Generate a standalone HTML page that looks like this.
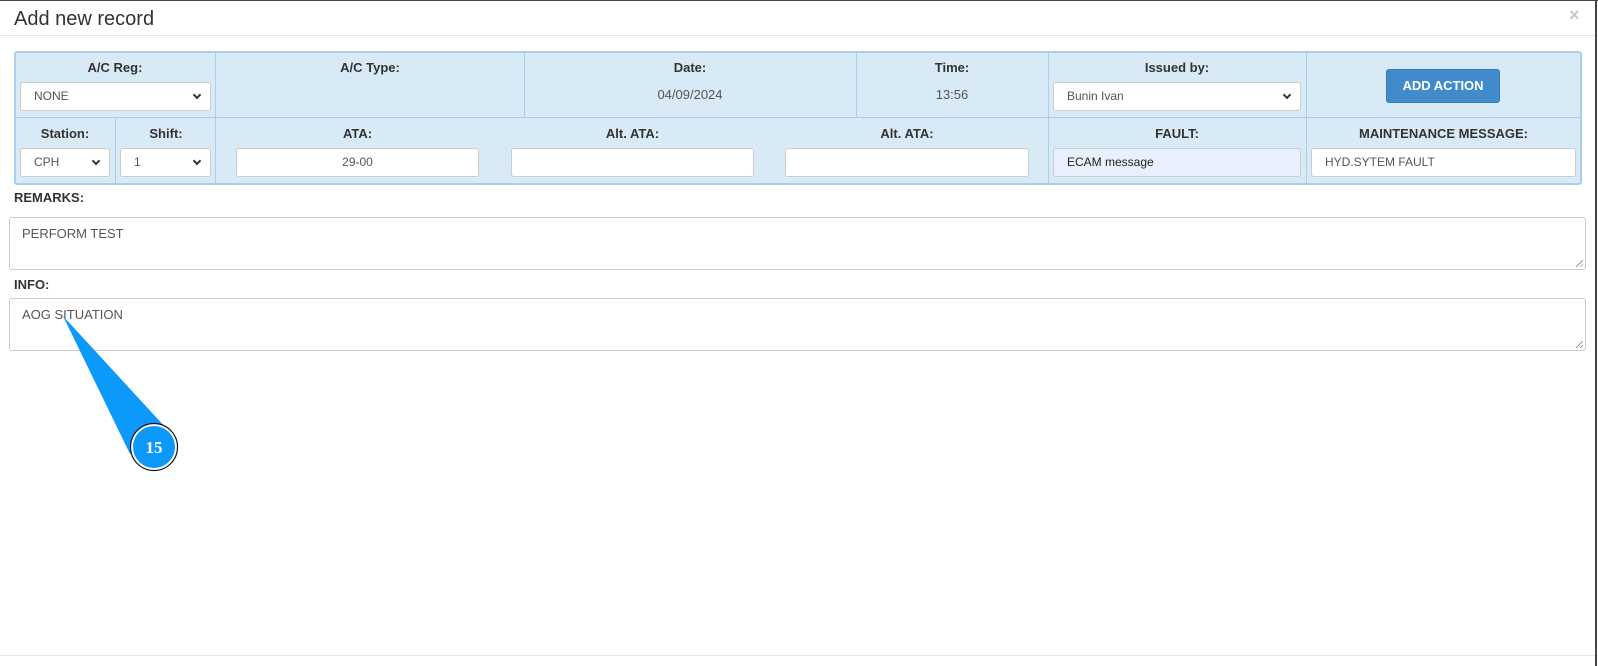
<!DOCTYPE html>
<html><head><meta charset="utf-8"><style>
*{box-sizing:border-box}
body{margin:0;width:1598px;height:666px;background:#fff;font-family:"Liberation Sans",Arial,sans-serif;color:#333;position:relative;overflow:hidden}
.a{position:absolute}
.lbl{position:absolute;font-weight:bold;font-size:13px;text-align:center;color:#333}
.inp{position:absolute;background:#fff;border:1px solid #ccc;border-radius:3px;font-size:12px;color:#555;line-height:26px;padding-left:13px}
.sel::after{content:"";position:absolute;right:10px;top:9px;width:4px;height:4px;border-right:2px solid #333;border-bottom:2px solid #333;transform:rotate(45deg)}
.vl{position:absolute;width:1px;background:#a9cfec}
.ta::after{content:"";position:absolute;right:2px;bottom:2px;width:7px;height:7px;background:linear-gradient(135deg,transparent 45%,#999 45%,#999 55%,transparent 55%,transparent 75%,#999 75%,#999 85%,transparent 85%)}
</style></head><body>
<div class="a" style="left:0;top:0;width:1598px;height:1px;background:#444"></div>
<div class="a" style="left:1595px;top:0;width:2px;height:666px;background:#444"></div>
<div class="a" style="left:14px;top:8px;font-size:20px;color:#333">Add new record</div>
<div class="a" style="left:1569px;top:5px;font-size:18px;color:#c8c8c8;font-weight:bold">×</div>
<div class="a" style="left:0;top:35px;width:1595px;height:1px;background:#e5e5e5"></div>
<div class="a" style="left:0;top:655px;width:1595px;height:1px;background:#e5e5e5"></div>

<div class="a" style="left:14px;top:51px;width:1568px;height:134px;background:#d9eaf7;border:2px solid #a9cfec;border-radius:3px"></div>
<div class="a" style="left:15px;top:117px;width:1566px;height:1px;background:#a9cfec"></div>
<div class="vl" style="left:215px;top:52px;height:132px"></div>
<div class="vl" style="left:524px;top:52px;height:66px"></div>
<div class="vl" style="left:856px;top:52px;height:66px"></div>
<div class="vl" style="left:1048px;top:52px;height:132px"></div>
<div class="vl" style="left:1306px;top:52px;height:132px"></div>
<div class="vl" style="left:115px;top:118px;height:66px"></div>

<div class="lbl" style="left:15px;width:200px;top:60px">A/C Reg:</div>
<div class="lbl" style="left:216px;width:308px;top:60px">A/C Type:</div>
<div class="lbl" style="left:524px;width:332px;top:60px">Date:</div>
<div class="lbl" style="left:856px;width:192px;top:60px">Time:</div>
<div class="lbl" style="left:1048px;width:258px;top:60px">Issued by:</div>
<div class="a" style="left:524px;width:332px;top:87px;text-align:center;font-size:13px;color:#555">04/09/2024</div>
<div class="a" style="left:856px;width:192px;top:87px;text-align:center;font-size:13px;color:#555">13:56</div>
<div class="inp sel" style="left:20px;top:82px;width:191px;height:29px">NONE</div>
<div class="inp sel" style="left:1053px;top:82px;width:248px;height:29px">Bunin Ivan</div>
<div class="a" style="left:1386px;top:69px;width:114px;height:34px;background:#428bca;border:1px solid #357ebd;border-radius:3px;color:#fff;font-weight:bold;font-size:13px;text-align:center;line-height:32px">ADD ACTION</div>

<div class="lbl" style="left:15px;width:100px;top:126px">Station:</div>
<div class="lbl" style="left:116px;width:100px;top:126px">Shift:</div>
<div class="lbl" style="left:236px;width:243px;top:126px">ATA:</div>
<div class="lbl" style="left:511px;width:243px;top:126px">Alt. ATA:</div>
<div class="lbl" style="left:785px;width:244px;top:126px">Alt. ATA:</div>
<div class="lbl" style="left:1048px;width:258px;top:126px">FAULT:</div>
<div class="lbl" style="left:1306px;width:275px;top:126px">MAINTENANCE MESSAGE:</div>
<div class="inp sel" style="left:20px;top:148px;width:90px;height:29px">CPH</div>
<div class="inp sel" style="left:120px;top:148px;width:91px;height:29px">1</div>
<div class="inp" style="left:236px;top:148px;width:243px;height:29px;text-align:center;padding:0">29-00</div>
<div class="inp" style="left:511px;top:148px;width:243px;height:29px"></div>
<div class="inp" style="left:785px;top:148px;width:244px;height:29px"></div>
<div class="inp" style="left:1053px;top:148px;width:248px;height:29px;background:#e8f0fd;color:#222">ECAM message</div>
<div class="inp" style="left:1311px;top:148px;width:265px;height:29px">HYD.SYTEM FAULT</div>

<div class="lbl" style="left:14px;top:190px;text-align:left">REMARKS:</div>
<div class="inp ta" style="left:9px;top:217px;width:1577px;height:53px;font-size:13px;line-height:16px;padding:8px 12px">PERFORM TEST</div>
<div class="lbl" style="left:14px;top:277px;text-align:left">INFO:</div>
<div class="inp ta" style="left:9px;top:298px;width:1577px;height:53px;font-size:13px;line-height:16px;padding:8px 12px">AOG SITUATION</div>

<svg class="a" style="left:0;top:0" width="1598" height="666">
<polygon points="63,316 130,454 166,428" fill="#0d99fc"/>
<circle cx="154" cy="447" r="22" fill="#0d99fc" stroke="#fff" stroke-width="2"/>
<circle cx="154" cy="447" r="23.5" fill="none" stroke="#111" stroke-width="1.2"/>
<text x="154" y="453" text-anchor="middle" font-family="Liberation Serif,serif" font-weight="bold" font-size="17" fill="#fff">15</text>
</svg>
</body></html>
